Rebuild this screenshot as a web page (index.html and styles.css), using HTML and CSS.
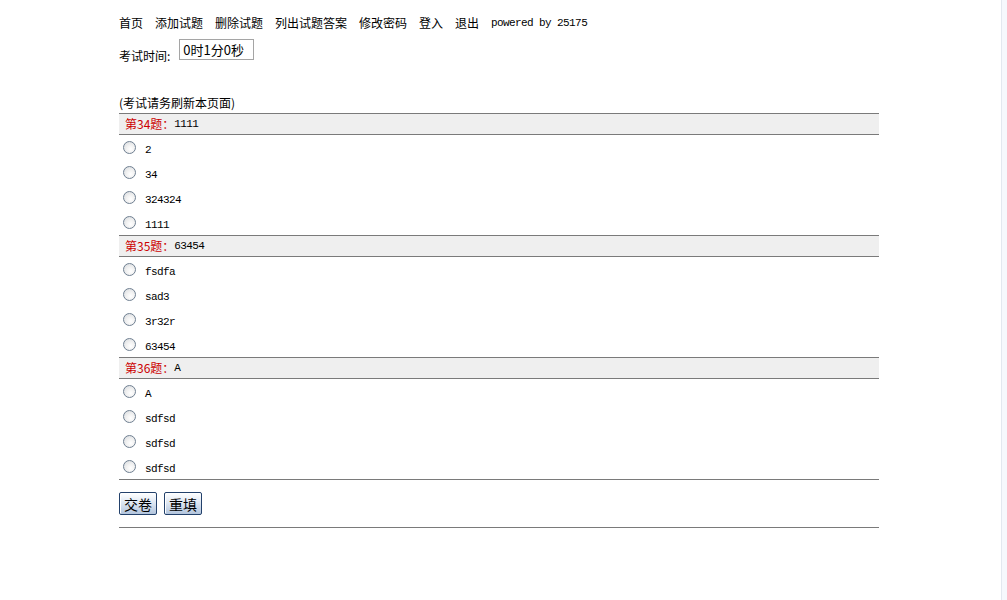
FILE: index.html
```html
<!DOCTYPE html>
<html lang="zh-CN">

<head>
  <meta charset="UTF-8">
  <title>在线考试</title>
  <link rel="stylesheet" href="styles.css">
</head>

<body>
  <div class="page">
    <div class="nav">
      <a href="#">首页</a>
      <a href="#">添加试题</a>
      <a href="#">删除试题</a>
      <a href="#">列出试题答案</a>
      <a href="#">修改密码</a>
      <a href="#">登入</a>
      <a href="#">退出</a>
      <span class="powered">powered by 25175</span>
    </div>

    <div class="timer">
      <span class="timer-label">考试时间:</span>
      <input type="text" class="timer-box" value="0时1分0秒" readonly>
    </div>

    <div class="note">(考试请务刷新本页面)</div>

    <form class="paper">
      <div class="q-head"><span class="q-no">第34题：</span><span class="mono">1111</span></div>
      <label class="opt"><input type="radio" name="q34"><span>2</span></label>
      <label class="opt"><input type="radio" name="q34"><span>34</span></label>
      <label class="opt"><input type="radio" name="q34"><span>324324</span></label>
      <label class="opt"><input type="radio" name="q34"><span>1111</span></label>

      <div class="q-head"><span class="q-no">第35题：</span><span class="mono">63454</span></div>
      <label class="opt"><input type="radio" name="q35"><span>fsdfa</span></label>
      <label class="opt"><input type="radio" name="q35"><span>sad3</span></label>
      <label class="opt"><input type="radio" name="q35"><span>3r32r</span></label>
      <label class="opt"><input type="radio" name="q35"><span>63454</span></label>

      <div class="q-head"><span class="q-no">第36题：</span><span class="mono">A</span></div>
      <label class="opt"><input type="radio" name="q36"><span>A</span></label>
      <label class="opt"><input type="radio" name="q36"><span>sdfsd</span></label>
      <label class="opt"><input type="radio" name="q36"><span>sdfsd</span></label>
      <label class="opt"><input type="radio" name="q36"><span>sdfsd</span></label>
    </form>

    <div class="actions">
      <button type="button" class="btn">交卷</button>
      <button type="button" class="btn">重填</button>
    </div>

    <div class="rule"></div>
  </div>

  <div class="scroll-strip"></div>
</body>

</html>
```

FILE: styles.css
```css
* {
  margin: 0;
  padding: 0;
  box-sizing: border-box;
}

body {
  background: #ffffff;
  color: #000;
  font-family: "Noto Sans CJK SC", "DejaVu Sans", sans-serif;
  font-size: 12px;
}

.page {
  width: 760px;
  margin-left: 119px;
  padding-top: 15px;
}

/* top links */
.nav {
  display: flex;
  align-items: center;
  height: 16px;
  line-height: 16px;
}

.nav a {
  color: #000;
  text-decoration: none;
  margin-right: 12px;
}

.powered {
  font-family: "Liberation Mono", monospace;
  font-size: 11px;
  letter-spacing: -0.6px;
}

/* timer */
.timer {
  display: flex;
  align-items: flex-start;
  margin-top: 8px;
  height: 21px;
}

.timer-label {
  line-height: 14px;
  margin-top: 10px;
  margin-right: 9px;
}

.timer-box {
  width: 75px;
  height: 21px;
  border: 1px solid #a5a5a5;
  padding: 0 3px;
  font-family: "Noto Sans CJK SC", sans-serif;
  font-size: 13px;
  color: #000;
  outline: none;
}

.note {
  margin-top: 35px;
  line-height: 16px;
}

/* questions */
.paper {
  margin-top: 2px;
  border-bottom: 1px solid #7a7a7a;
}

.q-head {
  display: flex;
  align-items: center;
  height: 22px;
  border-top: 1px solid #7a7a7a;
  border-bottom: 1px solid #7a7a7a;
  background: #efefef;
  padding-left: 6px;
}

.q-no {
  color: #cc0000;
  line-height: 20px;
}

.mono,
.opt span {
  font-family: "Liberation Mono", monospace;
  font-size: 11px;
  letter-spacing: -0.6px;
}

.opt {
  display: flex;
  align-items: center;
  height: 25px;
  padding-left: 4px;
}

.opt input {
  appearance: none;
  -webkit-appearance: none;
  width: 13px;
  height: 13px;
  border-radius: 50%;
  border: 1px solid #6f7f91;
  background: radial-gradient(circle at 60% 65%, #ffffff 0%, #f2f2f2 40%, #d4d8dc 100%);
  margin-right: 9px;
  margin-top: -1px;
}

.opt span {
  margin-top: 4px;
}

/* buttons */
.actions {
  display: flex;
  gap: 7px;
  margin-top: 12px;
}

.btn {
  height: 23px;
  width: 38px;
  border: 1px solid #23416b;
  border-radius: 2px;
  background: linear-gradient(#ffffff, #dfe8f3 45%, #b3c5dd);
  box-shadow: inset 1px 1px 0 #ffffff;
  font-family: "Noto Sans CJK SC", sans-serif;
  font-size: 14px;
  line-height: 20px;
  color: #000;
}

.rule {
  margin-top: 12px;
  border-top: 1px solid #7a7a7a;
}

.scroll-strip {
  position: fixed;
  top: 0;
  right: 0;
  width: 6px;
  height: 100%;
  background: #f6f8fc;
  border-left: 1px solid #e3e8ef;
}
```
